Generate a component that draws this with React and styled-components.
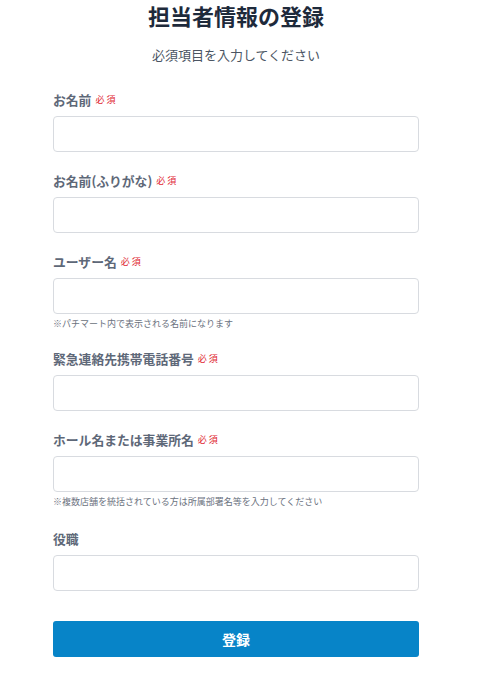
import React from 'react'
import styled, { createGlobalStyle } from 'styled-components'

const GlobalStyle = createGlobalStyle`
  body {
    margin: 0;
    background: #fff;
    font-family: "Noto Sans CJK JP", "Noto Sans", sans-serif;
  }
`

const Page = styled.div`
  width: 472px;
  display: flex;
  flex-direction: column;
  align-items: center;
`

const Title = styled.h1`
  margin: 0;
  font-size: 22px;
  line-height: 30px;
  font-weight: 700;
  color: #1e2a3b;
`

const Subtitle = styled.p`
  margin: 16px 0 0;
  font-size: 13px;
  line-height: 18px;
  color: #4b5563;
`

const Form = styled.form`
  width: 366px;
  margin-top: 26px;
  display: flex;
  flex-direction: column;
`

const Field = styled.div`
  display: flex;
  flex-direction: column;
  margin-bottom: ${(p) => (p.$spaced ? 21 : 19)}px;
`

const Label = styled.label`
  display: flex;
  align-items: center;
  gap: 4px;
  font-size: 12.8px;
  line-height: 20px;
  font-weight: 700;
  color: #5e6878;
  margin-bottom: 6px;
`

const Required = styled.span`
  font-size: 9px;
  font-weight: 400;
  color: #e0242f;
  letter-spacing: 2px;
`

const Input = styled.input`
  box-sizing: border-box;
  width: 100%;
  height: 36px;
  border: 1px solid #d8dbe0;
  border-radius: 4px;
  background: #fff;
  outline: none;
`

const Note = styled.div`
  margin-top: 3px;
  font-size: 9px;
  line-height: 13px;
  color: #6b7280;
`

const Button = styled.button`
  margin-top: 11px;
  height: 36px;
  width: 100%;
  border: none;
  border-radius: 3px;
  background: #0784c8;
  color: #fff;
  font-family: inherit;
  font-size: 14px;
  font-weight: 700;
`

const fields = [
  { label: 'お名前', required: true },
  { label: 'お名前(ふりがな)', required: true },
  { label: 'ユーザー名', required: true, note: '※パチマート内で表示される名前になります' },
  { label: '緊急連絡先携帯電話番号', required: true },
  { label: 'ホール名または事業所名', required: true, note: '※複数店舗を統括されている方は所属部署名等を入力してください', spaced: true },
  { label: '役職' },
]

export default function App() {
  return (
    <>
      <GlobalStyle />
      <Page>
        <Title>担当者情報の登録</Title>
        <Subtitle>必須項目を入力してください</Subtitle>
        <Form onSubmit={(e) => e.preventDefault()}>
          {fields.map((f) => (
            <Field key={f.label} $spaced={f.spaced}>
              <Label>
                {f.label}
                {f.required && <Required>必須</Required>}
              </Label>
              <Input type="text" />
              {f.note && <Note>{f.note}</Note>}
            </Field>
          ))}
          <Button type="submit">登録</Button>
        </Form>
      </Page>
    </>
  )
}
